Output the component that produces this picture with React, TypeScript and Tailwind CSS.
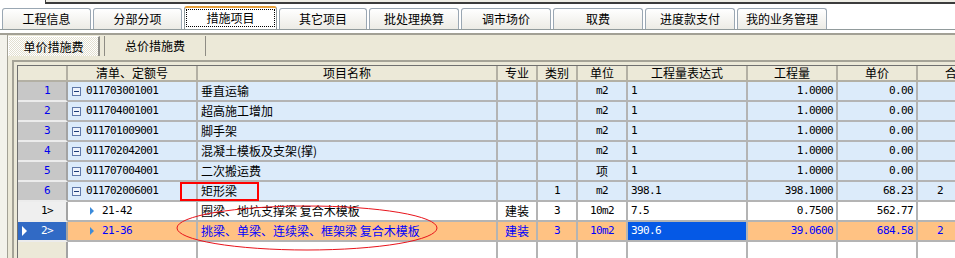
import React from "react";

const cjk = "font-['Noto_Sans_CJK_SC','Noto_Sans',sans-serif] text-[12px] leading-[14px]";
const mono = "font-['DejaVu_Sans_Mono','Noto_Sans_CJK_SC',monospace] text-[11px] leading-[12px] tracking-[-0.6px]";

type Row = {
  no: string;
  child?: boolean;
  selected?: boolean;
  code: string;
  name: string;
  zy?: string;
  lb?: string;
  dw: string;
  expr: string;
  qty: string;
  price: string;
  total?: string;
};

// 合价 column is scrolled off at the right edge; only its first digit shows
const rows: Row[] = [
  { no: "1", code: "011703001001", name: "垂直运输", dw: "m2", expr: "1", qty: "1.0000", price: "0.00" },
  { no: "2", code: "011704001001", name: "超高施工增加", dw: "m2", expr: "1", qty: "1.0000", price: "0.00" },
  { no: "3", code: "011701009001", name: "脚手架", dw: "m2", expr: "1", qty: "1.0000", price: "0.00" },
  { no: "4", code: "011702042001", name: "混凝土模板及支架(撑)", dw: "m2", expr: "1", qty: "1.0000", price: "0.00" },
  { no: "5", code: "011707004001", name: "二次搬运费", dw: "项", expr: "1", qty: "1.0000", price: "0.00" },
  { no: "6", code: "011702006001", name: "矩形梁", lb: "1", dw: "m2", expr: "398.1", qty: "398.1000", price: "68.23", total: "2" },
  { no: "1>", child: true, code: "21-42", name: "圈梁、地坑支撑梁 复合木模板", zy: "建装", lb: "3", dw: "10m2", expr: "7.5", qty: "0.7500", price: "562.77" },
  { no: "2>", child: true, selected: true, code: "21-36", name: "挑梁、单梁、连续梁、框架梁 复合木模板", zy: "建装", lb: "3", dw: "10m2", expr: "390.6", qty: "39.0600", price: "684.58", total: "2" },
];

const tabs = [
  { label: "工程信息", w: "w-[89px]" },
  { label: "分部分项", w: "w-[89px]" },
  { label: "措施项目", w: "w-[93px]", active: true },
  { label: "其它项目", w: "w-[88px]" },
  { label: "批处理换算", w: "w-[90px]" },
  { label: "调市场价", w: "w-[90px]" },
  { label: "取费", w: "w-[90px]" },
  { label: "进度款支付", w: "w-[90px]" },
  { label: "我的业务管理", w: "w-[90px]" },
];

const headers = ["", "清单、定额号", "项目名称", "专业", "类别", "单位", "工程量表达式", "工程量", "单价", "合价"];

function MinusBox() {
  return (
    <svg width="9" height="9" viewBox="0 0 9 9" className="shrink-0">
      <rect x="0.5" y="0.5" width="8" height="8" fill="#EEF3FB" stroke="#5F79A9" />
      <line x1="2" y1="4.5" x2="7" y2="4.5" stroke="#1D3C78" />
    </svg>
  );
}

function DataRow({ r }: { r: Row }) {
  const bg = r.selected ? "bg-[#FFC283]" : r.child ? "bg-white" : "bg-[#DCEBFA]";
  const color = r.selected ? "text-[#0000FF]" : "text-black";
  const cell = `h-[20px] border-r-2 border-b-2 border-[#B4B4B4] flex items-center overflow-hidden whitespace-nowrap ${bg} ${color}`;
  const head = r.selected
    ? "bg-[#316AC5] text-white"
    : r.child
    ? "bg-[#EFEFEF] text-black"
    : "bg-[#C7C7C7] text-[#0000EE]";

  return (
    <>
      <div className={`h-[20px] flex items-center pl-[4px] border-r-2 border-r-[#A3A3A3] border-b-2 border-b-[#ECECEC] ${head}`}>
        <div className="w-[6px] flex items-center">
          {r.selected && <div className="w-0 h-0 border-y-[5px] border-y-transparent border-l-[5px] border-l-white" />}
        </div>
        <span className={`flex-1 text-center ${mono}`}>{r.no}</span>
      </div>
      <div className={`${cell} ${r.child ? "pl-[22px]" : "pl-[4px]"}`}>
        {r.child ? (
          <div className="w-0 h-0 shrink-0 border-y-[4px] border-y-transparent border-l-[4px] border-l-[#3C8BDA]" />
        ) : (
          <MinusBox />
        )}
        <span className={`${mono} ${r.child ? "ml-[8px]" : "ml-[5px]"}`}>{r.code}</span>
      </div>
      <div className={`${cell} pl-[3px] ${cjk}`}>{r.name}</div>
      <div className={`${cell} justify-center ${cjk}`}>{r.zy}</div>
      <div className={`${cell} justify-center ${mono}`}>{r.lb}</div>
      <div className={`${cell} justify-center`}>
        {r.dw === "项" ? <span className={cjk}>项</span> : <span className={mono}>{r.dw}</span>}
      </div>
      {r.selected ? (
        <div className={`h-[20px] border-r-2 border-b-2 border-[#B4B4B4] flex items-center pl-[3px] bg-[#0559E6] text-white ${mono}`}>
          {r.expr}
        </div>
      ) : (
        <div className={`${cell} pl-[3px] ${mono}`}>{r.expr}</div>
      )}
      <div className={`${cell} justify-end pr-[3px] ${mono}`}>{r.qty}</div>
      <div className={`${cell} justify-end pr-[3px] ${mono}`}>{r.price}</div>
      <div className={`${cell} pl-[19px] ${mono}`}>{r.total}</div>
    </>
  );
}

export default function App() {
  return (
    <div className={`w-[955px] h-[258px] overflow-hidden relative bg-white ${cjk}`}>
      {/* top panel edge */}
      <div className="h-[6px] bg-white">
        <div className="ml-[45px] h-[4px] bg-[#EEEDE5] border-l border-b-2 border-[#3C3C3C]" />
      </div>

      {/* main tabs */}
      <div className="h-[24px] bg-white flex items-end gap-[2px] pl-[2px] border-b border-[#919B9C]">
        {tabs.map((t) =>
          t.active ? (
            <div
              key={t.label}
              className={`${t.w} h-[23px] shrink-0 flex bg-white border border-b-0 border-[#919B9C] border-t-2 border-t-[#E9A23B] rounded-t-[3px]`}
            >
              <div className="flex-1 m-[1px] mb-[2px] border border-dotted border-black flex items-center justify-center">
                {t.label}
              </div>
            </div>
          ) : (
            <div
              key={t.label}
              className={`${t.w} h-[21px] shrink-0 flex items-center justify-center bg-gradient-to-b from-white to-[#ECEBE5] border border-b-0 border-[#9AA7B3] rounded-t-[3px]`}
            >
              {t.label}
            </div>
          )
        )}
      </div>
      <div className="h-[5px] bg-white border-b-2 border-[#A2A095]" />

      <div className="flex h-[223px]">
        <div className="w-[7px] shrink-0 bg-[#F3F2EB]" />
        <div className="flex-1 min-w-0 overflow-hidden border-l border-[#A3A195] bg-[#ECE9D8] flex flex-col">
          {/* sub tabs */}
          <div className="h-[25px] shrink-0 flex items-start pt-[1px]">
            <div className="w-[92px] h-[20px] shrink-0 flex items-center justify-center border-t border-l border-white border-r-2 border-r-[#8A8A85] bg-[repeating-conic-gradient(#ffffff_0%_25%,#e2dfd0_0%_50%)] bg-[length:2px_2px]">
              单价措施费
            </div>
            <div className="ml-[4px] w-[102px] h-[20px] shrink-0 flex items-center justify-center border-l border-r border-[#8E8C84]">
              总价措施费
            </div>
          </div>

          {/* grid frame */}
          <div className="ml-[4px] flex-1 min-h-0 border-l-2 border-t-2 border-[#A5A397] pl-[3px] pt-[3px]">
            <div className="w-max border-l border-t border-[#707070] grid grid-cols-[50px_130px_300px_40px_40px_50px_120px_90px_80px_80px]">
              {headers.map((h, i) => (
                <div
                  key={i}
                  className="h-[16px] bg-[#ECE9D8] border-r-2 border-b-2 border-[#B3B0A4] flex items-center justify-center whitespace-nowrap"
                >
                  {h}
                </div>
              ))}
              {rows.map((r) => (
                <DataRow key={r.no} r={r} />
              ))}
              <div className="h-[20px] bg-[#ECE9D8] border-r-2 border-[#A3A3A3]" />
              {headers.slice(1).map((_, i) => (
                <div key={i} className="h-[20px] bg-white border-r-2 border-[#B4B4B4]" />
              ))}
            </div>
          </div>
        </div>
      </div>

      {/* annotations */}
      <div className="absolute left-[180px] top-[182px] w-[79px] h-[19px] border-2 border-[#FF0000]" />
      <svg className="absolute left-0 top-0 pointer-events-none" width="955" height="258">
        <ellipse cx="307" cy="228" rx="130" ry="22" fill="none" stroke="#E8141C" strokeWidth="1" />
      </svg>
    </div>
  );
}
